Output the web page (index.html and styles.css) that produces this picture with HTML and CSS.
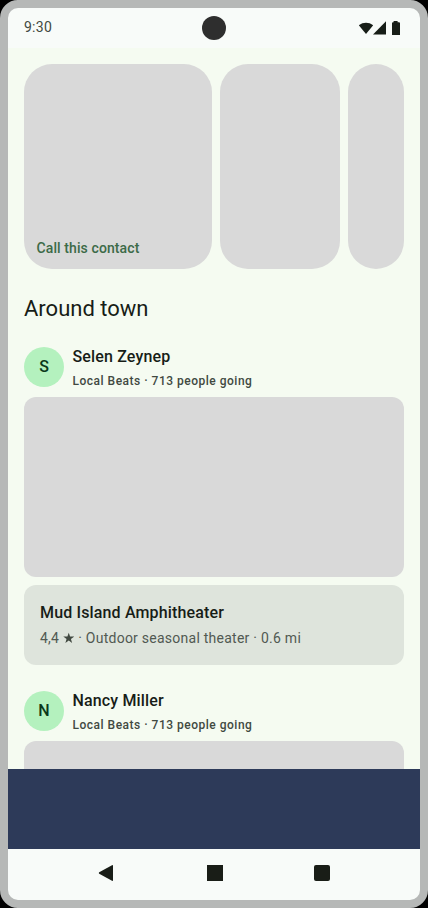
FILE: index.html
```html
<!DOCTYPE html>
<html lang="en">
<head>
<meta charset="utf-8">
<title>Around town</title>
<link rel="stylesheet" href="styles.css">
</head>
<body>
<div class="device">
  <header class="status">
    <span class="time">9:30</span>
    <span class="camera"></span>
    <svg class="indicators" width="44" height="16" viewBox="0 0 44 16">
      <path d="M0.8 5.2C5.2 1.9 10.8 1.9 15.2 5.2L8 14Z"/>
      <path d="M28 1.3V14.5H15Z"/>
      <path d="M35.6 1h4v1.2H41q1 0 1 1V15h-8V3.2q0-1 1-1h.6z"/>
    </svg>
  </header>
  <main class="content">
    <section class="carousel">
      <div class="tile tile-large"><span class="tile-label">Call this contact</span></div>
      <div class="tile tile-medium"></div>
      <div class="tile tile-small"></div>
    </section>
    <h1 class="heading">Around town</h1>
    <article class="post">
      <div class="author">
        <div class="avatar">S</div>
        <div class="author-text">
          <div class="name">Selen Zeynep</div>
          <div class="meta">Local Beats · 713 people going</div>
        </div>
      </div>
      <div class="media"></div>
      <div class="place">
        <div class="place-name">Mud Island Amphitheater</div>
        <div class="place-info">4,4 <svg class="star" width="11.5" height="12" viewBox="0 0 12 12"><path d="M6 0.4 7.4 4.4 11.7 4.4 8.3 7 9.5 11.2 6 8.7 2.5 11.2 3.7 7 0.3 4.4 4.6 4.4Z"/></svg> · Outdoor seasonal theater · 0.6 mi</div>
      </div>
    </article>
    <article class="post">
      <div class="author">
        <div class="avatar">N</div>
        <div class="author-text">
          <div class="name">Nancy Miller</div>
          <div class="meta">Local Beats · 713 people going</div>
        </div>
      </div>
      <div class="media"></div>
    </article>
  </main>
  <div class="bottom-bar"></div>
  <nav class="system-nav">
    <svg width="16" height="18" viewBox="0 0 16 18"><path d="M15 1.8V16.2Q15 17.3 14 16.8L1.2 9.7Q0.3 9 1.2 8.3L14 1.2Q15 .7 15 1.8Z"/></svg>
    <span class="home"></span>
    <span class="recent"></span>
  </nav>
</div>
</body>
</html>
```

FILE: styles.css
```css
* {
  box-sizing: border-box;
}

html {
  background: #000;
}

body {
  margin: 0;
  font-family: Roboto, sans-serif;
  color: #171d17;
}

.device {
  display: flex;
  flex-direction: column;
  width: 428px;
  height: 908px;
  border: 8px solid #b6b8b7;
  border-radius: 18px;
  overflow: hidden;
  background: #f8fbf9;
}

.status {
  display: grid;
  grid-template-columns: 1fr 24px 1fr;
  align-items: center;
  flex: none;
  height: 40px;
  padding: 0 18px 0 16px;
}

.time {
  padding-bottom: 2px;
  font-size: 14px;
  line-height: 20px;
  letter-spacing: 0.25px;
  color: #414941;
}

.camera {
  width: 24px;
  height: 24px;
  margin-left: 1px;
  border-radius: 50%;
  background: #2e2e2e;
}

.indicators {
  justify-self: end;
  fill: #171d17;
}

.content {
  flex: none;
  height: 721px;
  padding: 16px 16px 0;
  overflow: hidden;
  background: #f5fbf1;
}

.carousel {
  display: flex;
  gap: 8px;
  height: 205px;
}

.tile {
  border-radius: 28px;
  background: #d9d9d9;
}

.tile-large {
  display: flex;
  align-items: flex-end;
  width: 188px;
  padding: 0 12.5px 11px;
}

.tile-medium {
  width: 120px;
}

.tile-small {
  width: 56px;
}

.tile-label {
  font-size: 14px;
  line-height: 20px;
  font-weight: 500;
  letter-spacing: 0.1px;
  color: #3c6b48;
}

.heading {
  margin: 26px 0 24px;
  font-size: 22px;
  line-height: 28px;
  font-weight: 400;
}

.post {
  margin-bottom: 26px;
}

.author {
  display: flex;
  gap: 8px;
  height: 50px;
}

.avatar {
  width: 40px;
  height: 40px;
  border-radius: 50%;
  background: #b4f1be;
  font-size: 16px;
  line-height: 40px;
  font-weight: 500;
  text-align: center;
  color: #0b3819;
}

.author-text {
  padding-left: 0.5px;
}

.name {
  margin-top: -2px;
  font-size: 16px;
  line-height: 24px;
  font-weight: 500;
  letter-spacing: 0.15px;
}

.meta {
  margin-top: 4px;
  font-size: 12px;
  line-height: 16px;
  font-weight: 500;
  letter-spacing: 0.5px;
  color: #414941;
}

.media {
  height: 180px;
  border-radius: 12px;
  background: #d9d9d9;
}

.place {
  height: 80px;
  margin-top: 8px;
  padding: 16px;
  border-radius: 12px;
  background: #dee4dc;
}

.place-name {
  font-size: 16px;
  line-height: 24px;
  font-weight: 500;
  letter-spacing: 0.15px;
}

.place-info {
  margin-top: 3px;
  font-size: 14px;
  line-height: 20px;
  letter-spacing: 0.25px;
  color: #515952;
}

.star {
  vertical-align: -1px;
  fill: #414941;
}

.bottom-bar {
  flex: none;
  height: 80px;
  background: #2d3a59;
}

.system-nav {
  display: flex;
  align-items: center;
  gap: 92px;
  height: 48px;
  padding-left: 90px;
  fill: #191d17;
}

.home,
.recent {
  width: 16px;
  height: 16px;
  background: #191d17;
}

.home {
  margin-left: 1px;
}

.recent {
  margin-left: -1px;
  border-radius: 2px;
}
```
